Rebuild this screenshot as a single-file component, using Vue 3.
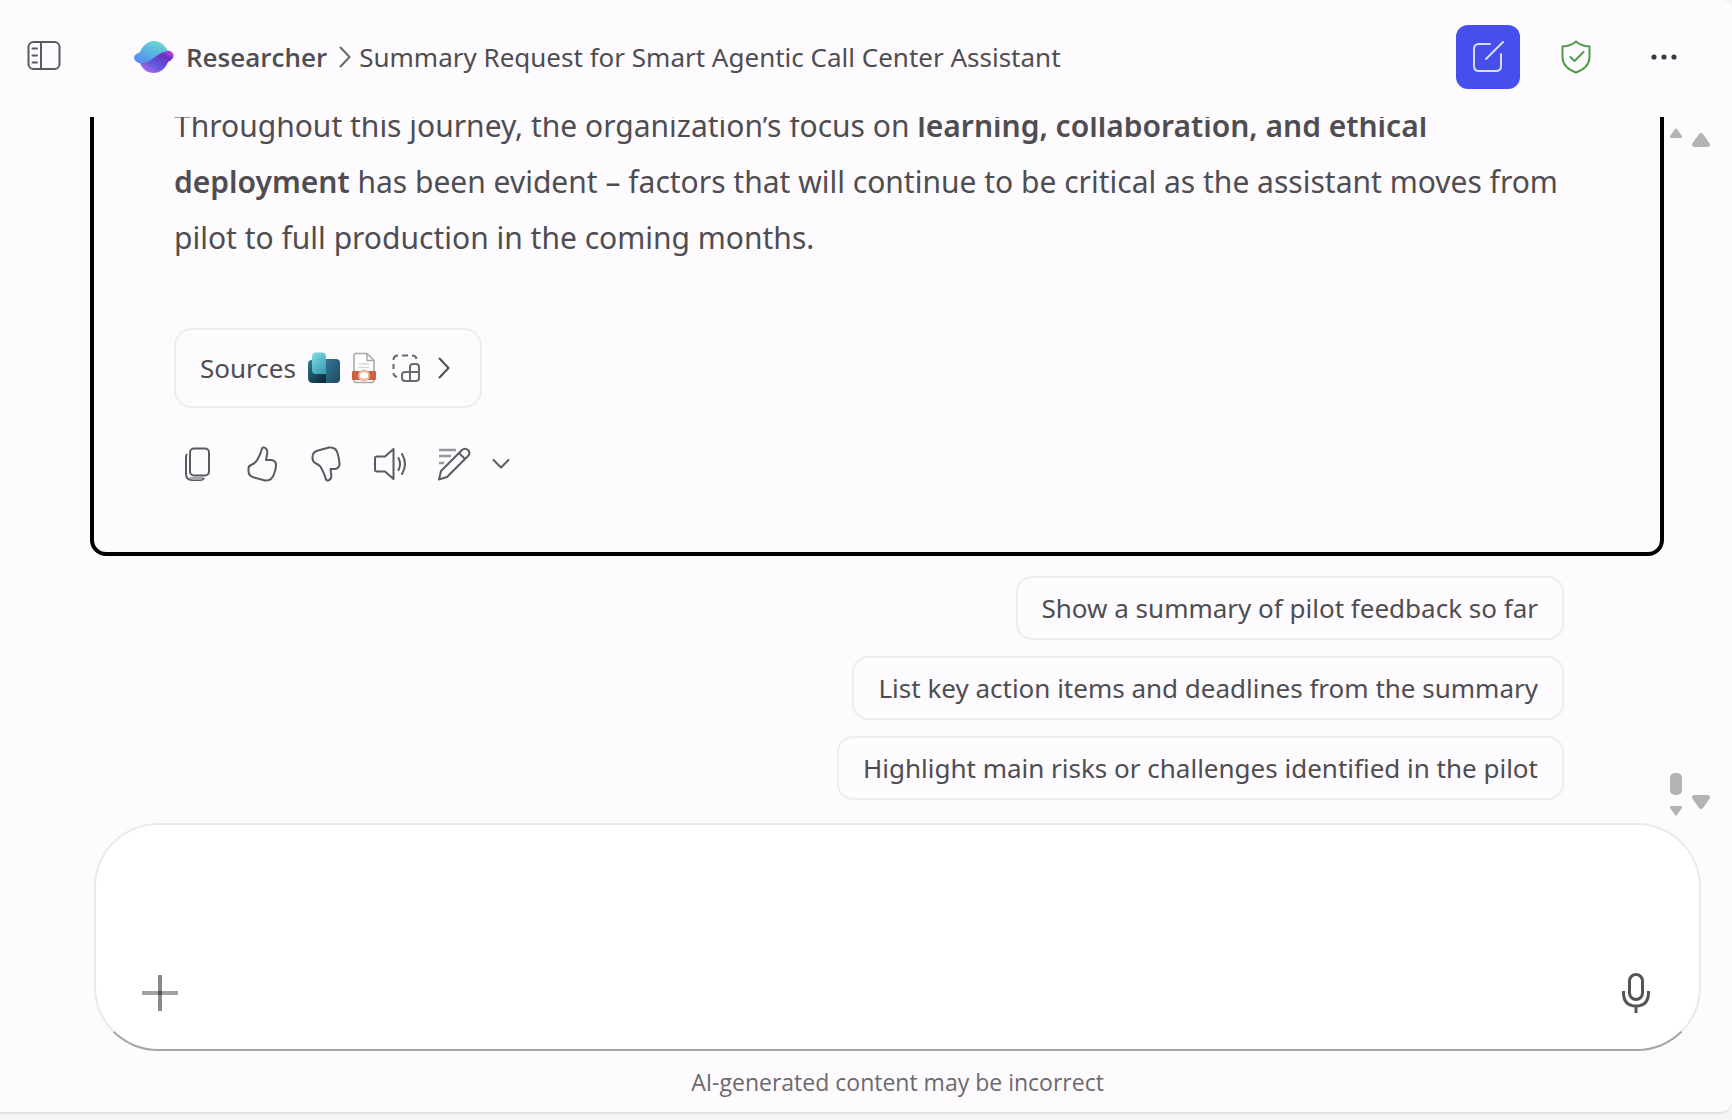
<script setup>
const suggestions = [
  'Show a summary of pilot feedback so far',
  'List key action items and deadlines from the summary',
  'Highlight main risks or challenges identified in the pilot',
]
</script>

<template>
  <div class="app">
    <div class="panel">
      <header class="header">
        <button class="icon-btn menu" aria-label="Toggle sidebar">
          <svg width="34" height="34" viewBox="0 0 34 34" fill="none" stroke="#5c5a5e" stroke-width="2">
            <rect x="1.500" y="2" width="31" height="27" rx="5" />
            <path d="M14 2V29" />
            <path d="M5.500 8.500H10M5.500 15.500H10M5.500 22.500H10" stroke-linecap="round" />
          </svg>
        </button>
        <nav class="crumbs" aria-label="Breadcrumb">
          <svg class="logo" width="40" height="32" viewBox="0 0 40 32">
            <defs>
              <linearGradient id="lgTop" x1="0.7" y1="0" x2="0.2" y2="1">
                <stop offset="0" stop-color="#6fd8d2" />
                <stop offset="0.5" stop-color="#55b3e2" />
                <stop offset="1" stop-color="#5a86f0" />
              </linearGradient>
              <linearGradient id="lgBottom" x1="1" y1="0" x2="0.2" y2="1">
                <stop offset="0" stop-color="#c455dc" />
                <stop offset="0.28" stop-color="#6b2fc4" />
                <stop offset="0.65" stop-color="#6257dc" />
                <stop offset="1" stop-color="#b56af0" />
              </linearGradient>
            </defs>
            <path d="M34 9.500C39 10 41 14.500 38.500 17.500Q37 19.500 34 21C31 28 26 32 20 32C13 32 8 28 6 22C15 23 21 11 34 9.500Z" fill="url(#lgBottom)" />
            <path d="M6 11C9 4 14 0 20 0C26 0 31 4 34 10C23 11 18 22 7 22.500C2 21.500 0 19 0 16.500C0 13.500 4 12.500 6 11Z" fill="url(#lgTop)" />
          </svg>
          <a class="crumb-root" href="#">Researcher</a>
          <svg width="12" height="22" viewBox="0 0 12 22" fill="none" stroke="#6a686c" stroke-width="2" stroke-linecap="round" stroke-linejoin="round">
            <path d="M1.500 1.500L10.500 11L1.500 20.500" />
          </svg>
          <h1 class="title">Summary Request for Smart Agentic Call Center Assistant</h1>
        </nav>
        <div class="tools">
          <button class="compose" aria-label="New chat">
            <svg width="32" height="32" viewBox="0 0 32 32" fill="none" stroke="#d9dbff" stroke-width="2" stroke-linecap="round">
              <path d="M18 3H7Q2 3 2 8V25Q2 30 7 30H24Q29 30 29 25V13" />
              <path d="M14 18L31 1" />
            </svg>
          </button>
          <button class="icon-btn" aria-label="Protected">
            <svg width="30" height="34" viewBox="0 0 30 34" fill="none" stroke="#4f9c47" stroke-width="2" stroke-linecap="round" stroke-linejoin="round">
              <path d="M15 1.500Q20 6 28.500 6.500V17Q28.500 27.500 15 32.500Q1.500 27.500 1.500 17V6.500Q10 6 15 1.500Z" />
              <path d="M9.500 17L13.500 21L22.500 12" />
            </svg>
          </button>
          <button class="icon-btn" aria-label="More options">
            <svg width="28" height="8" viewBox="0 0 28 8" fill="#3c3a3e">
              <circle cx="4" cy="4" r="2.600" />
              <circle cx="14" cy="4" r="2.600" />
              <circle cx="24" cy="4" r="2.600" />
            </svg>
          </button>
        </div>
      </header>

      <main class="body">
        <section class="conversation">
          <article class="card">
            <p class="answer">
              Throughout this journey, the organization’s focus on
              <strong>learning, collaboration, and ethical deployment</strong>
              has been evident – factors that will continue to be critical as the assistant moves
              from pilot to full production in the coming months.
            </p>
            <button class="sources">
              <span>Sources</span>
              <svg width="32" height="32" viewBox="0 0 32 32">
                <defs>
                  <linearGradient id="sA" x1="0" y1="0" x2="0.6" y2="1">
                    <stop offset="0" stop-color="#7fe0e2" />
                    <stop offset="1" stop-color="#3fa0b4" />
                  </linearGradient>
                  <linearGradient id="sB" x1="0" y1="0" x2="1" y2="1">
                    <stop offset="0" stop-color="#33779a" />
                    <stop offset="1" stop-color="#21495f" />
                  </linearGradient>
                  <linearGradient id="sC" x1="0" y1="0" x2="0.8" y2="1">
                    <stop offset="0" stop-color="#2a7d92" />
                    <stop offset="1" stop-color="#0e2a3a" />
                  </linearGradient>
                </defs>
                <path d="M17 7H28Q32 7 32 11V27Q32 31 28 31H17Z" fill="url(#sB)" />
                <path d="M4 8H18V31H5Q0 31 0 26V12Q0 8 4 8Z" fill="url(#sC)" />
                <path d="M8 0.500H14Q18 0.500 18 5V22H8Q4 22 4 18V5Q4 0.500 8 0.500Z" fill="url(#sA)" />
              </svg>
              <svg width="24" height="32" viewBox="0 0 24 32" fill="none">
                <path d="M3.500 1.500H15L22 8.500V28Q22 30.500 19.500 30.500H4Q2 30.500 2 28.500V3.500Q2 1.500 3.500 1.500Z" fill="#fff" stroke="#a9a8a9" stroke-width="1.500" />
                <path d="M15 1.500V8.500H22" stroke="#a9a8a9" stroke-width="1.500" />
                <path d="M6.500 12H17M6.500 15.500H17" stroke="#d8d5da" stroke-width="1.500" />
                <rect x="0" y="19" width="24" height="9" rx="1" fill="#d0603f" />
                <circle cx="12" cy="23.500" r="6" fill="#f0b5a4" />
                <rect x="8" y="20.500" width="8" height="6" rx="2.500" fill="#fff" />
              </svg>
              <svg class="apps" width="28" height="28" viewBox="0 0 28 28" fill="none" stroke="#6a686c" stroke-width="2">
                <path d="M6 1.500Q1.500 1.500 1.500 6M10 1.500H16M20 1.500Q24 1.500 24.500 5M1.500 10V15M1.500 19Q1.500 22 5 23" />
                <path d="M18 13Q18 10 21 10H24Q27 10 27 13V24Q27 27 24 27H13Q10 27 10 24V21Q10 18 13 18H27M18 12V27" />
              </svg>
              <svg class="open" width="12" height="22" viewBox="0 0 12 22" fill="none" stroke="#4d4b4f" stroke-width="2" stroke-linecap="round" stroke-linejoin="round">
                <path d="M1.500 1.500L10.500 11L1.500 20.500" />
              </svg>
            </button>
            <div class="actions">
              <button class="act" aria-label="Copy">
                <svg width="36" height="36" viewBox="0 0 36 36" fill="none" stroke="#5c5a5e" stroke-width="2">
                  <path d="M7 8Q6 9 6 12V28Q6 34 12 34H20Q23 34 24 32" />
                  <path d="M9 31H24L21 34H12Z" fill="#a6a5a7" stroke="none" />
                  <rect x="10" y="2.500" width="19" height="27" rx="4" />
                </svg>
              </button>
              <button class="act" aria-label="Like">
                <svg width="36" height="36" viewBox="0 0 36 36" fill="none" stroke="#5c5a5e" stroke-width="2" stroke-linejoin="round">
                  <path d="M19 1.500C22.500 1 24 5 23 8.500L22 14H27Q32 14 32 19.500Q32 23 30 28Q28 35 21 34.500L10 31.500Q4.500 30 4.500 25V22.500Q4.500 19.500 8 18.500Q12 17 14 12.500Q17 7 18 2.500Z" />
                </svg>
              </button>
              <button class="act" aria-label="Dislike">
                <svg width="36" height="36" viewBox="0 0 36 36" fill="none" stroke="#5c5a5e" stroke-width="2" stroke-linejoin="round">
                  <path d="M19 34.500C22.500 35 24 31 23 27.500L22.500 23H27Q32 22 31.500 17Q31 12 29.500 7Q28 1 21 1.500L10 4.500Q4.500 6 4.500 11V12.500Q4.500 15.500 8 17.500Q12 19 14 23.500Q16.500 28 18 33.500Z" />
                </svg>
              </button>
              <button class="act" aria-label="Read aloud">
                <svg width="36" height="36" viewBox="0 0 36 36" fill="none" stroke="#5c5a5e" stroke-width="2" stroke-linecap="round" stroke-linejoin="round">
                  <path d="M21.500 3V33L13 25.500H5Q3 25.500 3 23.500V12.500Q3 10.500 5 10.500H13Z" />
                  <path d="M26.500 12Q29.500 18 26.500 24M30 8Q36 18 30 28" />
                </svg>
              </button>
              <button class="act" aria-label="Edit in Pages">
                <svg width="36" height="36" viewBox="0 0 36 36" fill="none" stroke="#5c5a5e" stroke-width="2" stroke-linejoin="round">
                  <path d="M3 4H20M3 10H15M3 17H8" stroke="#98969a" stroke-width="2.500" />
                  <path d="M3 33.500L5 25L26 4Q29 1.500 32 4Q35 7 32 10L11 31Z" />
                  <path d="M23 7L29 13" />
                </svg>
              </button>
              <button class="act chevron" aria-label="More edit options">
                <svg width="18" height="12" viewBox="0 0 18 12" fill="none" stroke="#5c5a5e" stroke-width="2" stroke-linecap="round" stroke-linejoin="round">
                  <path d="M1.500 2L9 9.500L16.500 2" />
                </svg>
              </button>
            </div>
          </article>
          <ul class="suggestions">
            <li v-for="s in suggestions" :key="s">
              <button class="chip">{{ s }}</button>
            </li>
          </ul>
        </section>
        <div class="bar inner" aria-hidden="true">
          <svg width="12" height="10" viewBox="0 0 12 10"><path d="M5 1Q6 0 7 1L12 8Q12 10 11 10H1Q0 10 0 8Z" /></svg>
          <span class="thumb"></span>
          <svg width="12" height="10" viewBox="0 0 12 10"><path d="M5 9Q6 10 7 9L12 2Q12 0 11 0H1Q0 0 0 2Z" /></svg>
        </div>
        <div class="bar outer" aria-hidden="true">
          <svg width="18" height="14" viewBox="0 0 18 14"><path d="M7 1Q9 -1 11 1L18 11Q18 14 16 14H2Q0 14 0 11Z" /></svg>
          <svg class="push" width="18" height="14" viewBox="0 0 18 14"><path d="M7 13Q9 15 11 13L18 3Q18 0 16 0H2Q0 0 0 3Z" /></svg>
        </div>
      </main>

      <footer class="footer">
        <form class="composer" @submit.prevent>
          <textarea class="prompt" aria-label="Message Researcher"></textarea>
          <div class="composer-row">
            <button type="button" class="icon-btn" aria-label="Add content">
              <svg width="36" height="36" viewBox="0 0 36 36" fill="none" stroke-width="4">
                <path d="M0 18H36" stroke="#a3a2a3" />
                <path d="M18 0V36" stroke="#8a898a" />
                <path d="M16 18H20" stroke="#5a595a" />
              </svg>
            </button>
            <button type="button" class="icon-btn" aria-label="Dictate">
              <svg width="28" height="40" viewBox="0 0 28 40" fill="none" stroke="#555356" stroke-width="3">
                <rect x="7.500" y="1.500" width="13" height="25" rx="6.500" />
                <path d="M1.500 18V20.500Q2 33 14 33Q26 33 26.500 20.500V18M14 33V40" />
              </svg>
            </button>
          </div>
        </form>
        <p class="note">AI-generated content may be incorrect</p>
      </footer>
    </div>
  </div>
</template>

<style>
body {
  margin: 0;
  background: #f6f5f6;
}
</style>

<style scoped>
.app {
  box-sizing: border-box;
  height: 100vh;
  padding-bottom: 6px;
  font-family: "Noto Sans", "Open Sans", sans-serif;
  color: #4f4d51;
}
.panel {
  box-sizing: border-box;
  height: 100%;
  display: flex;
  flex-direction: column;
  background: #fdfbfe;
  border-bottom: 2px solid #e2e0e3;
  border-radius: 0 12px 12px 0;
  overflow: hidden;
}
button {
  font: inherit;
  color: inherit;
  background: none;
  border: 0;
  padding: 0;
  cursor: pointer;
}
svg {
  display: block;
  flex: none;
}
.icon-btn {
  display: flex;
  align-items: center;
  justify-content: center;
}
.header {
  display: flex;
  align-items: center;
  padding: 25px 54px 28px 27px;
  font-size: 26px;
  line-height: 36px;
}
.menu {
  margin-right: 73px;
}
.crumbs {
  flex: 1;
  display: flex;
  align-items: center;
  min-width: 0;
}
.logo {
  margin-right: 12px;
}
.crumb-root {
  color: inherit;
  font-family: "Open Sans", "Noto Sans", sans-serif;
  font-weight: 600;
  text-decoration: none;
  margin-right: 12px;
}
.title {
  margin: 0 0 0 8px;
  font-size: inherit;
  font-weight: 400;
  white-space: nowrap;
}
.tools {
  display: flex;
  align-items: center;
  gap: 41px;
}
.tools .icon-btn + .icon-btn {
  margin-left: 18px;
}
.compose {
  display: flex;
  align-items: center;
  justify-content: center;
  width: 64px;
  height: 64px;
  border-radius: 12px;
  background: #464feb;
}
.body {
  flex: 1;
  min-height: 0;
  display: flex;
  padding: 0 22px 0 90px;
}
.conversation {
  flex: 1;
  min-width: 0;
  display: flex;
  flex-direction: column;
  justify-content: flex-end;
  overflow: hidden;
  padding-bottom: 23px;
}
.card {
  padding: 32px 80px 70px;
  border: 4px solid #000;
  border-radius: 16px;
}
.answer {
  margin: 0 0 62px;
  font-size: 30px;
  line-height: 56px;
}
.answer strong {
  font-weight: 600;
}
.sources {
  display: flex;
  align-items: center;
  height: 80px;
  padding: 0 24px;
  gap: 12px;
  border: 2px solid #eeecef;
  border-radius: 18px;
  font-size: 26px;
}
.apps {
  margin-left: 4px;
}
.open {
  margin: 0 6px;
}
.actions {
  display: flex;
  align-items: center;
  gap: 28px;
  margin-top: 38px;
  padding-left: 6px;
}
.chevron {
  margin-left: -8px;
}
.suggestions {
  list-style: none;
  display: flex;
  flex-direction: column;
  align-items: flex-end;
  gap: 16px;
  margin: 20px 100px 0 0;
  padding: 0;
}
.chip {
  display: block;
  height: 64px;
  padding: 0 24px;
  border: 2px solid #eeecee;
  border-radius: 16px;
  font-size: 26px;
}
.bar {
  display: flex;
  flex-direction: column;
  align-items: center;
  fill: #b5b2b6;
}
.inner {
  margin-left: 6px;
  padding: 11px 0 7px;
}
.thumb {
  width: 12px;
  height: 22px;
  margin: auto 0 11px;
  border-radius: 5px;
  background: #b5b2b6;
}
.outer {
  margin-left: 10px;
  padding: 16px 0 14px;
}
.push {
  margin-top: auto;
}
.footer {
  padding: 0 31px 0 94px;
}
.composer {
  padding: 24px 49px 36px 46px;
  background: #fff;
  border: 2px solid #ebe9ec;
  border-bottom-color: #a6a5a7;
  border-radius: 64px;
}
.prompt {
  display: block;
  box-sizing: border-box;
  width: 100%;
  height: 124px;
  padding: 0;
  border: 0;
  outline: 0;
  resize: none;
  background: transparent;
  font: inherit;
  font-size: 26px;
}
.composer-row {
  display: flex;
  align-items: center;
  justify-content: space-between;
}
.note {
  margin: 14px 0 13px;
  font-family: "Open Sans", "Noto Sans", sans-serif;
  font-size: 23px;
  line-height: 34px;
  text-align: center;
  color: #6b696d;
}
</style>
